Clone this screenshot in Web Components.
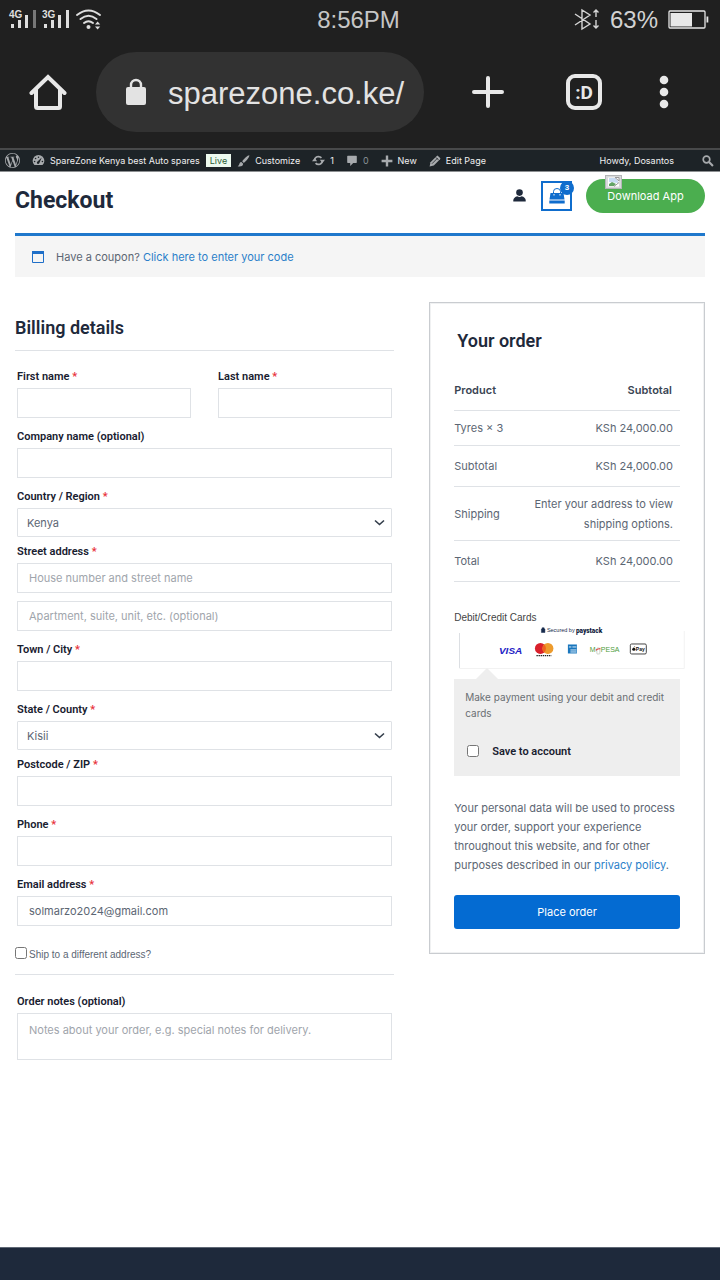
<!DOCTYPE html>
<html lang="en">
<head>
<meta charset="utf-8">
<meta name="viewport" content="width=device-width, initial-scale=1">
<title>Checkout – SpareZone Kenya</title>
<style>
:root{--ink:#1e293b;--body:#5c6673;--blue:#0f6dcd;--line:#dfe2e6}
*{box-sizing:border-box}
body{margin:0;background:#fff;color:var(--body);font:11px/20px Inter,"Liberation Sans",Arial,sans-serif;min-height:100vh;display:flex;flex-direction:column}
</style>
</head>
<body>
<phone-status></phone-status>
<browser-bar></browser-bar>
<admin-bar></admin-bar>
<site-header></site-header>
<coupon-notice></coupon-notice>
<checkout-layout>
  <billing-form></billing-form>
  <order-summary slot="aside"></order-summary>
</checkout-layout>
<site-footer></site-footer>

<script>
const define = (name, html) => customElements.define(name, class extends HTMLElement {
  constructor() {
    super();
    this.attachShadow({ mode: 'open' }).innerHTML = '<style>*{box-sizing:border-box}svg{display:block;flex:none}a{color:inherit;text-decoration:none}button{font:inherit;color:inherit;background:none;border:0;padding:0;cursor:pointer}</style>' + html;
  }
});

define('phone-status', `
<style>
:host{display:grid;grid-template-columns:1fr auto 1fr;align-items:center;height:38px;padding:0 11px 0 8px;background:#202020;color:#d2d2d2;font:24px/38px "Liberation Sans",Arial,sans-serif}
.right{display:flex;justify-content:flex-end;align-items:center;gap:10px}
time{color:#c6c6c6}
time,span{padding-top:1px}
</style>
<svg width="96" height="38" viewBox="8 0 96 38" fill="#dedede">
  <g font-family="Liberation Sans,sans-serif" font-weight="700" font-size="10"><text x="9" y="17">4G</text><text x="42" y="17">3G</text></g>
  <path d="M11 23h3v4h-3zM18 19h3v8h-3zM25 14h3v13h-3zM44 23h3v4h-3zM51 19h3v8h-3zM58 14h3v13h-3zM66 9h3v18h-3z"/>
  <path fill="#777" d="M33 9h3v18h-3z"/>
  <g fill="none" stroke="#dedede" stroke-width="2" stroke-linecap="round"><path d="M77 14q11.500-9 23 0M80.500 18q8-6.500 16 0M84 22q4.500-3.500 9 0"/></g>
  <circle cx="88.500" cy="26" r="2"/><path d="M95 23.500l2.600-3 2.600 3zM95 25.500l2.600 3 2.600-3z"/>
</svg>
<time>8:56PM</time>
<div class="right">
  <svg width="26" height="24" viewBox="0 0 26 24" fill="none" stroke="#d5d5d5" stroke-width="1.400"><path d="M1 6l15 10-8 5V2l8 5L1 17M22 2v7M19.500 4.500L22 2l2.500 2.500M22 12v8M19.500 17.500L22 20l2.500-2.500"/></svg>
  <span>63%</span>
  <svg width="41" height="20" viewBox="0 0 41 20"><rect x="1" y="1" width="36" height="17" rx="1" fill="none" stroke="#e6e6e6" stroke-width="1.300"/><path fill="#e8e8e8" d="M2.500 3H24v13.500H2.500zM38.500 6.500h1.800v6h-1.800z"/></svg>
</div>`);

define('browser-bar', `
<style>
:host{display:flex;align-items:center;height:112px;padding:14px 24px 16px 0;background:#202020;border-bottom:2px solid #48494a;color:#e3e3e3}
button{display:grid;place-items:center;width:96px;height:80px}
.menu{width:64px}
.url{flex:1;min-width:0;display:flex;align-items:center;gap:21px;height:80px;padding:0 0 0 29px;margin-right:16px;border-radius:40px;background:#323232;font:31px/40px "Liberation Sans",Arial,sans-serif;overflow:hidden}
.url span{padding-top:4px}
</style>
<button aria-label="Home"><svg width="38" height="38" viewBox="0 0 38 38" fill="none" stroke="#e8e8e8" stroke-width="4"><path d="M2.500 20L19 4l16.500 16" stroke-linecap="round"/><path d="M7 16v17.500q0 1.500 1.500 1.500h21q1.500 0 1.500-1.500V16"/></svg></button>
<div class="url"><svg width="22" height="28" viewBox="0 0 22 28"><rect x="1" y="9" width="20" height="18" rx="2" fill="#e3e3e3"/><path d="M6 10V7a5 5 0 0 1 10 0v3" fill="none" stroke="#e3e3e3" stroke-width="2.400"/></svg><span>sparezone.co.ke/</span></div>
<button aria-label="New tab"><svg width="32" height="32" viewBox="0 0 32 32" stroke="#e8e8e8" stroke-width="4" stroke-linecap="round"><path d="M16 2v28M2 16h28"/></svg></button>
<button aria-label="Tabs"><svg width="36" height="36" viewBox="0 0 36 36"><rect x="2" y="2" width="32" height="32" rx="7" fill="none" stroke="#e8e8e8" stroke-width="4"/><text x="18" y="25" text-anchor="middle" font-family="Roboto,sans-serif" font-weight="700" font-size="19" fill="#e8e8e8">:D</text></svg></button>
<button class="menu" aria-label="More"><svg width="10" height="34" viewBox="0 0 10 34" fill="#e8e8e8"><circle cx="5" cy="5" r="4.300"/><circle cx="5" cy="17" r="4.300"/><circle cx="5" cy="29" r="4.300"/></svg></button>`);

define('admin-bar', `
<style>
:host{display:flex;align-items:center;gap:12px;height:21px;padding:0 6px 0 5px;background:#1d2327;color:#f0f0f1;font-size:9px;line-height:20px;white-space:nowrap}
a{display:flex;align-items:center;gap:5px}
svg{fill:#a7aaad}
.site,.live{margin-right:-6px}
.live{padding:0 4px;line-height:13px;background:#edfaef;color:#2c5c37}
.zero{color:#8c9196}
.howdy{margin-left:auto;margin-right:16px}
</style>
<a href="#" aria-label="WordPress"><svg width="15" height="15" viewBox="0 0 24 24"><path d="M21.469 6.825c.84 1.537 1.318 3.3 1.318 5.175 0 3.979-2.156 7.456-5.363 9.325l3.295-9.527c.615-1.54.82-2.771.82-3.864 0-.405-.026-.78-.07-1.11m-7.981.105c.647-.03 1.232-.105 1.232-.105.582-.075.514-.93-.067-.899 0 0-1.755.135-2.88.135-1.064 0-2.85-.15-2.85-.15-.585-.03-.661.855-.075.885 0 0 .54.061 1.125.09l1.68 4.605-2.37 7.08L5.354 6.9c.649-.03 1.234-.1 1.234-.1.585-.075.516-.93-.065-.896 0 0-1.746.138-2.874.138-.2 0-.438-.008-.69-.015C4.911 3.15 8.235 1.215 12 1.215c2.809 0 5.365 1.072 7.286 2.833-.046-.003-.091-.009-.141-.009-1.06 0-1.812.923-1.812 1.914 0 .89.513 1.643 1.06 2.531.411.72.89 1.643.89 2.977 0 .915-.354 1.994-.821 3.479l-1.075 3.585-3.9-11.61.001.014zM12 22.784c-1.059 0-2.081-.153-3.048-.437l3.237-9.406 3.315 9.087c.024.053.05.101.078.149-1.12.393-2.325.609-3.582.609M1.211 12c0-1.564.336-3.05.935-4.39L7.29 21.709C3.694 19.96 1.212 16.271 1.211 12M12 0C5.385 0 0 5.385 0 12s5.385 12 12 12 12-5.385 12-12S18.615 0 12 0"/></svg></a>
<a href="#" class="site"><svg width="13" height="13" viewBox="0 0 20 20"><path d="M3.800 17h12.400A9 9 0 1 0 3.800 17z"/><g fill="#1d2327"><circle cx="10" cy="5" r="1.200"/><circle cx="5.500" cy="7" r="1.200"/><circle cx="4" cy="11.500" r="1.200"/><circle cx="16" cy="11.500" r="1.200"/><path d="M15 5.500l-3.500 8a2 2 0 1 1-3-2z"/></g></svg>SpareZone Kenya best Auto spares</a>
<span class="live">Live</span>
<a href="#"><svg width="13" height="14" viewBox="0 0 20 20"><path d="M19 1c-2-.5-8 5-11 9.500l2.500 2.500C15 9.500 19.500 3 19 1zM6.800 11.500C4 11.500 4 14 3 16c-.5 1-1.500 1.700-2 2 3 1 8.500.5 8.500-3.800z"/></svg>Customize</a>
<a href="#"><svg width="13" height="13" viewBox="0 0 20 20"><path fill="none" stroke="#a7aaad" stroke-width="2.600" d="M4 10a6 6 0 0 1 10.500-4M16 10a6 6 0 0 1-10.500 4"/><path d="M0 11l4-5 4 5zM12 9l4 5 4-5z"/></svg>1</a>
<a href="#" class="zero"><svg width="12" height="13" viewBox="0 0 20 20"><path d="M3 2h14a1 1 0 0 1 1 1v10a1 1 0 0 1-1 1h-5l-5 5v-5H3a1 1 0 0 1-1-1V3a1 1 0 0 1 1-1z"/></svg>0</a>
<a href="#"><svg width="12" height="12" viewBox="0 0 20 20"><path d="M8 1h4v7h7v4h-7v7H8v-7H1V8h7z"/></svg>New</a>
<a href="#"><svg width="12" height="12" viewBox="0 0 20 20"><path d="M13 1.500Q14 .5 15 1.500l3.500 3.500q1 1 0 2L8 17.500 1 19l1.500-7z"/><path d="M5 14.500L14.500 5M11.500 4l4.500 4.500" stroke="#1d2327" stroke-width="1.300"/></svg>Edit Page</a>
<a href="#" class="howdy">Howdy, Dosantos</a>
<a href="#" aria-label="Search"><svg width="12" height="12" viewBox="0 0 20 20"><circle cx="7.500" cy="7.500" r="5.500" fill="none" stroke="#a7aaad" stroke-width="2.800"/><path d="M10.500 13l2.500-2.500 6.500 6.500-2.500 2.500z"/></svg></a>`);

define('site-header', `
<style>
:host{display:flex;align-items:center;height:62px;padding:0 15px 14px;border-top:1px solid #8d9092}
h1{margin:10px auto 0 0;font:700 23px/32px Roboto,sans-serif;color:var(--ink)}
.cart{position:relative;display:grid;place-items:center;width:31px;height:30px;margin:0 14px 0 15px;border:2px solid var(--blue)}
.badge{position:absolute;top:-2px;right:-4px;width:14px;height:14px;border-radius:7px;background:var(--blue);color:#fff;font:700 8px/14px "Liberation Sans",sans-serif;text-align:center}
.app{position:relative;width:119px;height:34px;border-radius:17px;background:#4bae4f;color:#fff;line-height:34px;text-align:center}
.app svg{position:absolute;left:19px;top:-4px}
</style>
<h1>Checkout</h1>
<a href="#" aria-label="Account"><svg width="13" height="13" viewBox="0 0 13 13" fill="#1e293b"><circle cx="6.500" cy="3.600" r="3.300"/><path d="M.3 12.500V11q.5-2.800 4-3.700 2.200 1.300 4.400 0 3.500.9 4 3.700v1.500z"/></svg></a>
<a href="#" class="cart" aria-label="Cart"><svg width="16" height="16" viewBox="0 0 16 16" fill="#0f6dcd"><path d="M1.500 5h13l1 6.500H.5zM.3 12.600h15.400v2.900H.3z"/><path d="M4.500 7V3.500a3.500 3 0 0 1 7 0V7" fill="none" stroke="#0f6dcd"/><path d="M5 7.500V6M11 7.500V6" stroke="#fff"/></svg><span class="badge">3</span></a>
<a href="#" class="app"><svg width="17" height="14" viewBox="0 0 17 14"><rect x=".5" y=".5" width="16" height="13" fill="#d8dadb" stroke="#b4b6b8"/><rect x="3" y="2.500" width="11" height="9" fill="#fff"/><path d="M4 3h6l3 3v2l-9-1z" fill="#c7dbf3"/><path d="M4 11V9l3-2 4 2-2 2z" fill="#62a465"/><path d="M10 2.500l4 3.500v-3.500zM9 11.500l5-4" stroke="#999" fill="none"/></svg>Download App</a>`);

define('coupon-notice', `
<style>
:host{display:flex;align-items:center;gap:12px;height:44px;margin:0 15px 24px;padding:0 17px;background:#f5f5f5;border-top:3px solid #1f78cc}
p{margin:0}
a{color:#2b7fc9}
</style>
<svg width="12" height="12" viewBox="0 0 12 12"><path d="M.5 1.500h11v10H.5z" fill="none" stroke="#1f6fc8"/><path d="M0 0h12v3H0z" fill="#1f6fc8"/></svg>
<p>Have a coupon? <a href="#">Click here to enter your code</a></p>`);

define('checkout-layout', `
<style>
:host{display:grid;grid-template-columns:55fr 40fr;gap:35px;align-items:start;flex:1;padding:0 15px}
</style>
<slot></slot><slot name="aside"></slot>`);

const fieldStyle = `<style>
:host{display:block}
label{display:block;font:600 11px/22px Roboto,sans-serif;color:#18202f}
b{color:#e8303a;font-weight:600}
.box{display:block;width:100%;height:30px;margin:0;padding:0 11px;border:1px solid var(--line);border-radius:0;background:#fff;color:#5c6673;font:11px/16px Inter,"Liberation Sans",sans-serif;appearance:none;outline:0}
textarea.box{height:47px;padding-top:8px;resize:none}
.box::placeholder{color:#9fa5ac;opacity:1}
select.box{height:29px;padding:0 9px;border-radius:1px}
.pick{position:relative}
.pick svg{position:absolute;right:7px;top:11px;pointer-events:none}
</style>`;

customElements.define('form-field', class extends HTMLElement {
  connectedCallback() {
    const get = n => this.getAttribute(n) || '';
    const kind = get('kind'), label = get('label');
    const star = this.hasAttribute('required') ? ' <b>*</b>' : '';
    let control = `<input class="box" id="c" type="${get('type') || 'text'}" value="${get('value')}" placeholder="${get('hint')}" aria-label="${label || get('hint')}">`;
    if (kind === 'select') control = `<div class="pick"><select class="box" id="c"><option>${get('value')}</option></select><svg width="11" height="8" viewBox="0 0 11 8" fill="none" stroke="#333d4a" stroke-width="1.600"><path d="M1 1.500l4.500 4L10 1.500"/></svg></div>`;
    if (kind === 'area') control = `<textarea class="box" id="c" placeholder="${get('hint')}"></textarea>`;
    this.attachShadow({ mode: 'open' }).innerHTML = '<style>*{box-sizing:border-box}</style>' + fieldStyle +
      (label ? `<label for="c">${label}${star}</label>` : '') + control;
  }
});

define('billing-form', `
<style>
:host{display:block;padding-top:15px}
h2{margin:0 0 15px;padding-bottom:10px;border-bottom:1px solid var(--line);font:600 18px/24px Roboto,sans-serif;color:var(--ink)}
.fields{display:flex;flex-direction:column;gap:8px;padding:0 2px}
.names{display:grid;grid-template-columns:1fr 1fr;gap:27px}
[kind=select]{margin-bottom:-4px}
.ship{display:flex;align-items:center;gap:2px;margin:20px 0 16px;padding-bottom:10px;border-bottom:1px solid var(--line);font:10px/18px "Liberation Sans",Arial,sans-serif}
input{width:12px;height:12px;margin:0 0 4px}
</style>
<h2>Billing details</h2>
<div class="fields">
  <div class="names"><form-field label="First name" required></form-field><form-field label="Last name" required></form-field></div>
  <form-field label="Company name (optional)"></form-field>
  <form-field kind="select" label="Country / Region" value="Kenya" required></form-field>
  <form-field label="Street address" hint="House number and street name" required></form-field>
  <form-field hint="Apartment, suite, unit, etc. (optional)"></form-field>
  <form-field label="Town / City" required></form-field>
  <form-field kind="select" label="State / County" value="Kisii" required></form-field>
  <form-field label="Postcode / ZIP" required></form-field>
  <form-field label="Phone" type="tel" required></form-field>
  <form-field label="Email address" type="email" value="solmarzo2024@gmail.com" required></form-field>
</div>
<div class="ship"><input type="checkbox" id="ship"><label for="ship">Ship to a different address?</label></div>
<div class="fields"><form-field kind="area" label="Order notes (optional)" hint="Notes about your order, e.g. special notes for delivery."></form-field></div>`);

define('card-logos', `
<style>
:host{display:block;margin:0 -5px 0 5px}
svg{width:100%;height:auto}
</style>
<svg viewBox="0 0 226 42" role="img" aria-label="Accepted cards">
  <path d="M.5 6v35.500h225V4" fill="none" stroke="#f2f2f2"/><path d="M.5 6v35" stroke="#dcdfe3"/>
  <path d="M82.500 2h3.500v3.500h-3.500zM83.200 2.500V.8h2v1.700" fill="#172b4d" stroke="#172b4d" stroke-width=".5"/>
  <text x="88" y="5.500" font-family="Liberation Sans,sans-serif" font-size="5.500" fill="#172b4d">Secured by</text>
  <text x="117" y="5.500" font-family="Roboto,sans-serif" font-weight="900" font-size="6.500" fill="#101b3d">paystack</text>
  <text x="40" y="27.500" font-family="Liberation Sans,sans-serif" font-weight="700" font-style="italic" font-size="10" fill="#2222c5">VISA</text>
  <circle cx="81.500" cy="21.500" r="5.500" fill="#d9202b"/><circle cx="89" cy="21.500" r="5.500" fill="#ed9b2d"/><path d="M85.300 17.500a5.500 5.500 0 0 1 0 8 5.500 5.500 0 0 1 0-8z" fill="#ee6220"/>
  <path d="M77.500 28.600h15" stroke="#222" stroke-width="1.200" stroke-dasharray="1.400 .7"/>
  <path fill="#1976bd" d="M109 17.500h9v9h-9z"/><path d="M110 20h2.500M113.500 20h4M111.500 23h6M111.500 25h6" stroke="#dcecf8"/>
  <g font-family="Liberation Sans,sans-serif" font-size="7" fill="#4d9c3b"><text x="131" y="25">M</text><text x="142" y="25">PESA</text></g>
  <rect x="138" y="21" width="3" height="6" rx=".6" fill="#fff" stroke="#a9b9a4" stroke-width=".6"/><path d="M137 23.500q1.500-2 4.500-1.700" stroke="#d33" fill="none" stroke-width="1.200"/>
  <rect x="171.500" y="17" width="16" height="10" rx="1.300" fill="#fff" stroke="#444"/>
  <circle cx="175" cy="22.300" r="1.600" fill="#111"/><path d="M175 20.600l.9-1.200" stroke="#111" stroke-width=".7"/>
  <text x="177" y="24.300" font-family="Liberation Sans,sans-serif" font-size="5" font-weight="700" fill="#111">Pay</text>
</svg>`);

define('order-summary', `
<style>
:host{display:block;margin-top:1px;padding:24px;border:1px solid #c9ccd0;outline:1px solid #f0f1f2;outline-offset:-2px}
h2{margin:1px 3px 17px;font:600 18px/26px Roboto,sans-serif;color:var(--ink)}
table{width:100%;border-collapse:collapse;line-height:20px}
th,td{padding:7px 0;border-bottom:1px solid var(--line);text-align:left;font-weight:400}
thead th{padding:9px 0 10px;font-weight:600;color:#3a4553}
tr>:last-child{text-align:right;padding-right:7px}
thead th:last-child{padding-right:8px}
.roomy>*{padding:10px 0}
.tight>*{padding-bottom:6px}
.method{display:block;margin-top:27px;color:#444;font:10px/18px "Liberation Sans",Arial,sans-serif}
.pay{position:relative;margin-top:10px;padding:10px 11px 11px;background:#eee;color:#6a6e73;font-size:10px;line-height:16px}
.pay::before{content:"";position:absolute;left:22px;top:-11px;border:11px solid transparent;border-top:0;border-bottom-color:#eee}
.pay p{margin:0 0 24px}
.save{display:flex;align-items:center;gap:13px;font:600 11px/14px Roboto,sans-serif;color:#18202f;padding-bottom:5px}
input{width:12px;height:12px;margin:0 0 3px 2px}
.privacy{margin:23px 0 20px;line-height:19px}
.privacy a{color:#2b7fc9}
button{display:block;width:100%;height:34px;border-radius:3px;background:#046bd2;color:#fff}
</style>
<h2>Your order</h2>
<table>
<thead><tr><th scope="col">Product</th><th scope="col">Subtotal</th></tr></thead>
<tbody>
<tr><td>Tyres × 3</td><td>KSh 24,000.00</td></tr>
<tr class="roomy"><th scope="row">Subtotal</th><td>KSh 24,000.00</td></tr>
<tr class="tight"><th scope="row">Shipping</th><td>Enter your address to view<br>shipping options.</td></tr>
<tr class="roomy"><th scope="row">Total</th><td>KSh 24,000.00</td></tr>
</tbody>
</table>
<span class="method">Debit/Credit Cards</span>
<card-logos></card-logos>
<div class="pay"><p>Make payment using your debit and credit cards</p><div class="save"><input type="checkbox" id="save"><label for="save">Save to account</label></div></div>
<p class="privacy">Your personal data will be used to process your order, support your experience throughout this website, and for other purposes described in our <a href="#">privacy policy</a>.</p>
<button type="submit">Place order</button>`);

define('site-footer', `<style>:host{display:block;height:33px;background:#1e293b;border-top:1px solid #5f6875}</style>`);
</script>
</body>
</html>
